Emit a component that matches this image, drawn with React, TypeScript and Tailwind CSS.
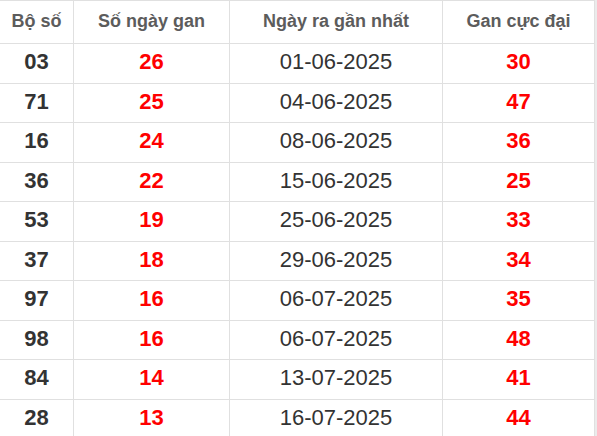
import React from "react";

const rows: [string, string, string, string][] = [
  ["03", "26", "01-06-2025", "30"],
  ["71", "25", "04-06-2025", "47"],
  ["16", "24", "08-06-2025", "36"],
  ["36", "22", "15-06-2025", "25"],
  ["53", "19", "25-06-2025", "33"],
  ["37", "18", "29-06-2025", "34"],
  ["97", "16", "06-07-2025", "35"],
  ["98", "16", "06-07-2025", "48"],
  ["84", "14", "13-07-2025", "41"],
  ["28", "13", "16-07-2025", "44"],
];

export default function App() {
  return (
    <div
      className="w-[597px] h-[436px] overflow-hidden bg-white flex"
      style={{ fontFamily: '"Liberation Sans", Arial, sans-serif' }}
    >
      <div className="w-[595px] border-r border-[#e0e0e0] flex flex-col shrink-0">
        <div className="flex h-[43px] border-t border-[#e0e0e0] shrink-0 text-[18px] font-bold text-[#5c5c5c]">
          <div className="w-[73px] flex items-center justify-center pb-[2px]">Bộ số</div>
          <div className="w-[156px] border-l border-[#e0e0e0] flex items-center justify-center pb-[2px]">Số ngày gan</div>
          <div className="w-[213px] border-l border-[#e0e0e0] flex items-center justify-center pb-[2px]">Ngày ra gần nhất</div>
          <div className="flex-1 border-l border-[#e0e0e0] flex items-center justify-center pb-[2px]">Gan cực đại</div>
        </div>
        {rows.map((r, i) => (
          <div key={i} className="flex h-[39.5px] border-t border-[#e0e0e0] shrink-0 text-[22px]">
            <div className="w-[73px] flex items-center justify-center pb-[3px] font-bold text-[#333333]">{r[0]}</div>
            <div className="w-[156px] border-l border-[#e0e0e0] flex items-center justify-center pb-[3px] font-bold text-[#ff0000]">{r[1]}</div>
            <div className="w-[213px] border-l border-[#e0e0e0] flex items-center justify-center pb-[3px] text-[#333333]">{r[2]}</div>
            <div className="flex-1 border-l border-[#e0e0e0] flex items-center justify-center pb-[3px] font-bold text-[#ff0000]">{r[3]}</div>
          </div>
        ))}
      </div>
      <div className="flex-1 bg-[#ebebeb]" />
    </div>
  );
}
